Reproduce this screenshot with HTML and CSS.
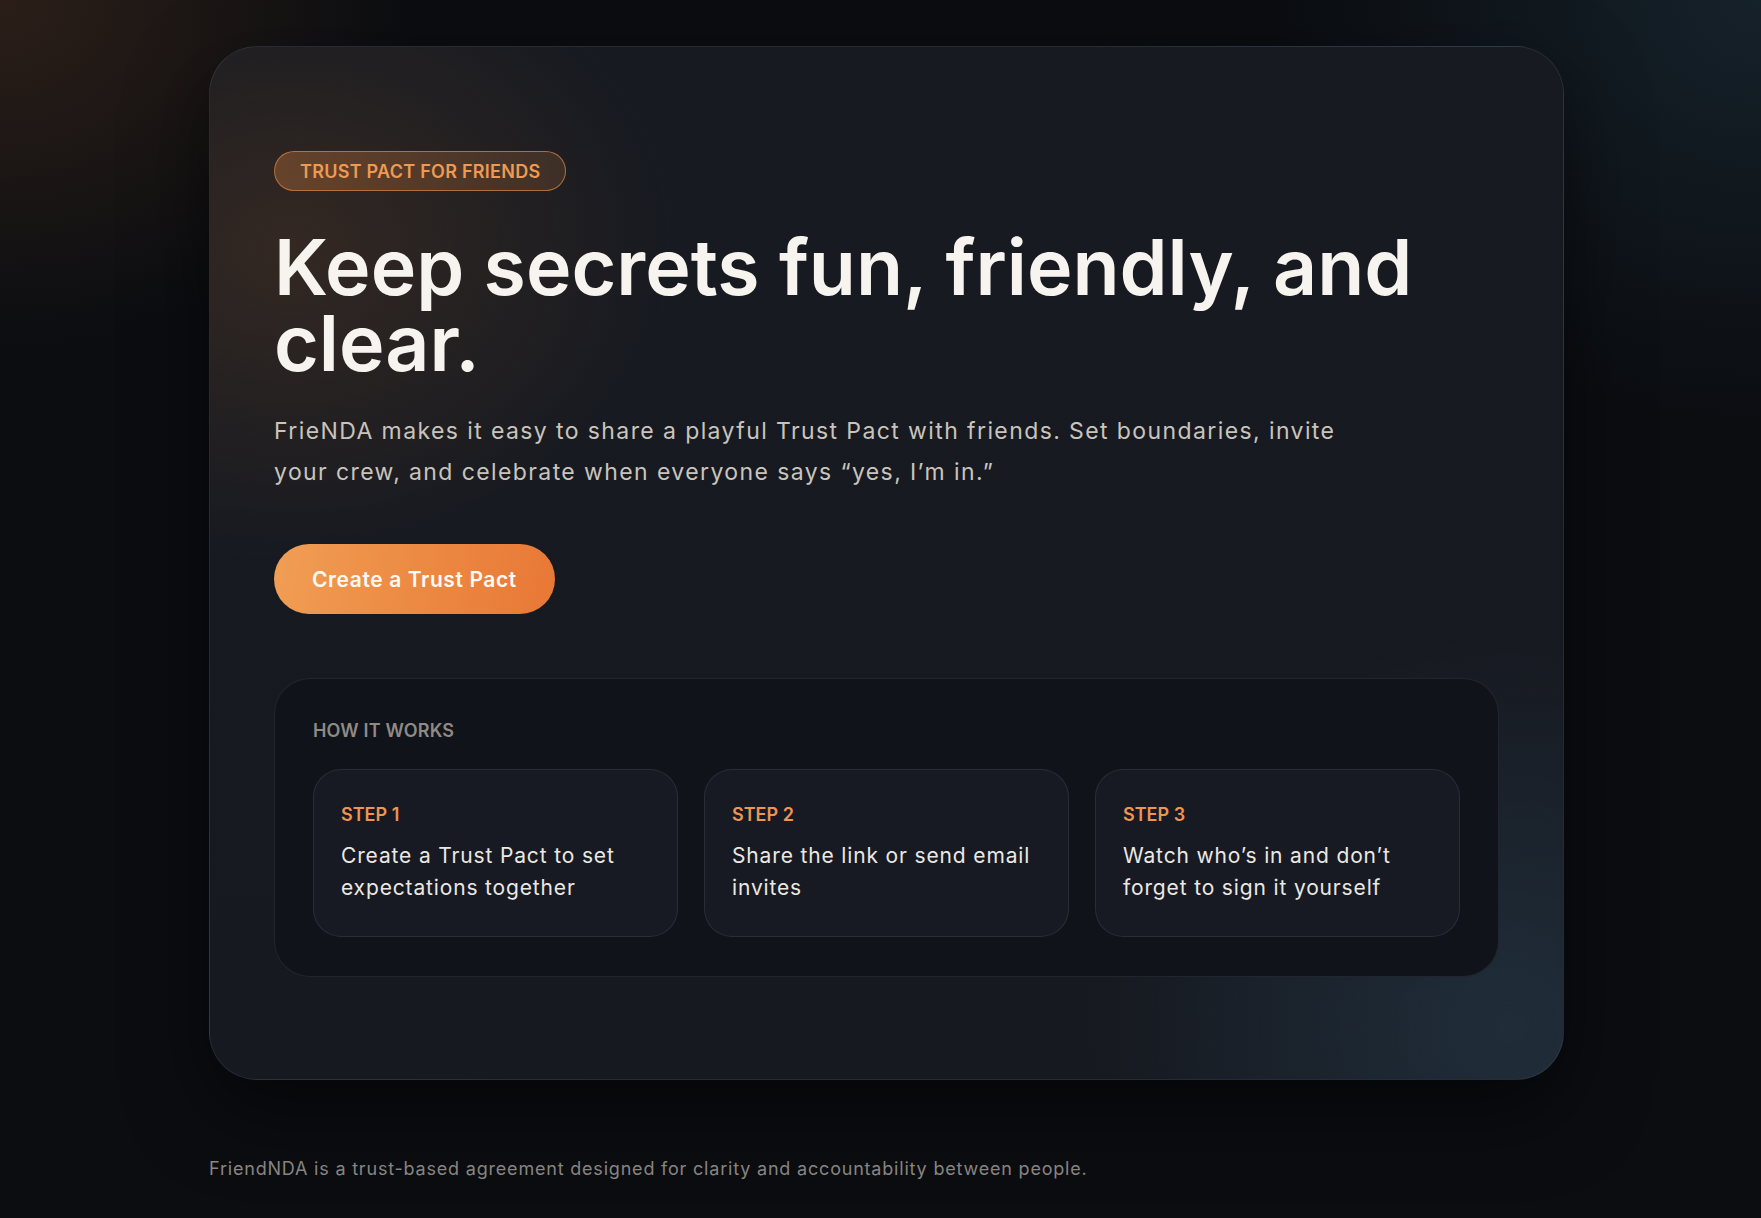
FILE: index.html
```html
<!DOCTYPE html>
<html lang="en">
<head>
<meta charset="utf-8">
<title>FrieNDA — Trust Pact for Friends</title>
<link rel="stylesheet" href="styles.css">
</head>
<body>
<main class="page">
  <section class="card">
    <span class="badge">Trust Pact for Friends</span>
    <h1 class="title">Keep secrets fun, friendly, and clear.</h1>
    <p class="lead">FrieNDA makes it easy to share a playful Trust Pact with friends. Set boundaries, invite your crew, and celebrate when everyone says “yes, I’m in.”</p>
    <a class="btn" href="#">Create a Trust Pact</a>
    <div class="how">
      <div class="how-title">How it works</div>
      <div class="steps">
        <div class="step">
          <div class="step-label">Step 1</div>
          <div class="step-text">Create a Trust Pact to set expectations together</div>
        </div>
        <div class="step">
          <div class="step-label">Step 2</div>
          <div class="step-text">Share the link or send email invites</div>
        </div>
        <div class="step">
          <div class="step-label">Step 3</div>
          <div class="step-text">Watch who’s in and don’t forget to sign it yourself</div>
        </div>
      </div>
    </div>
  </section>
  <footer class="foot">FriendNDA is a trust-based agreement designed for clarity and accountability between people.</footer>
</main>
</body>
</html>
```

FILE: styles.css
```css
* { box-sizing: border-box; }

html, body { margin: 0; }

body {
  min-height: 100vh;
  font-family: Inter, "Noto Sans", sans-serif;
  color: #f6f3ee;
  background:
    radial-gradient(600px 500px at 0 0, rgba(70, 45, 30, 0.55), rgba(70, 45, 30, 0) 70%),
    radial-gradient(700px 600px at 100% 0, rgba(30, 50, 62, 0.55), rgba(30, 50, 62, 0) 70%),
    #0b0d11;
}

.page {
  width: 1355px;
  margin-left: 209px;
  padding-top: 46px;
  padding-bottom: 40px;
}

.card {
  position: relative;
  border: 1px solid rgba(120, 140, 170, 0.16);
  border-radius: 48px;
  padding: 104px 64px 102px 64px;
  background:
    radial-gradient(520px 420px at 80px 200px, rgba(75, 52, 36, 0.55), rgba(75, 52, 36, 0) 75%),
    radial-gradient(560px 520px at 1300px 980px, rgba(35, 52, 66, 0.75), rgba(35, 52, 66, 0) 75%),
    linear-gradient(180deg, #171a21 0%, #161920 100%);
  box-shadow: 0 30px 80px rgba(0, 0, 0, 0.55);
}

.badge {
  display: inline-flex;
  align-items: center;
  height: 40px;
  padding: 0 25px;
  border: 1px solid rgba(214, 130, 66, 0.75);
  border-radius: 999px;
  background: linear-gradient(90deg, rgba(150, 92, 50, 0.55), rgba(120, 80, 50, 0.35));
  color: #ee9a52;
  font-size: 18px;
  font-weight: 600;
  letter-spacing: 0.015em;
  text-transform: uppercase;
}

.title {
  margin: 38px 0 0;
  font-size: 77px;
  line-height: 76px;
  font-weight: 600;
  letter-spacing: 0;
  color: #f7f4ef;
  max-width: 1200px;
}

.lead {
  margin: 30px 0 0;
  max-width: 1100px;
  font-size: 23px;
  line-height: 41px;
  color: #c9c4bd;
  letter-spacing: 1.4px;
}

.btn {
  display: inline-flex;
  align-items: center;
  height: 70px;
  margin-top: 51px;
  padding: 0 38px;
  border-radius: 35px;
  background: linear-gradient(100deg, #f19e55 0%, #ec8a43 50%, #e87835 100%);
  color: #fffaf4;
  font-size: 21px;
  font-weight: 600;
  letter-spacing: 0.6px;
  text-decoration: none;
}

.how {
  margin-top: 64px;
  padding: 41px 38px 39px;
  border: 1px solid rgba(120, 135, 160, 0.16);
  border-radius: 36px;
  background: #10131a;
}

.how-title {
  font-size: 18px;
  font-weight: 600;
  letter-spacing: 0.01em;
  text-transform: uppercase;
  color: #8f8a84;
}

.steps {
  display: grid;
  grid-template-columns: repeat(3, 1fr);
  gap: 26px;
  margin-top: 28px;
}

.step {
  height: 168px;
  padding: 33px 27px 0;
  border: 1px solid rgba(120, 135, 160, 0.18);
  border-radius: 28px;
  background: #171a22;
}

.step-label {
  font-size: 18px;
  font-weight: 600;
  text-transform: uppercase;
  color: #ee9550;
  line-height: 24px;
}

.step-text {
  margin-top: 13px;
  font-size: 21px;
  line-height: 32px;
  color: #ebe8e3;
  letter-spacing: 0.85px;
}

.foot {
  margin-top: 78px;
  font-size: 18px;
  color: #8d8985;
  letter-spacing: 0.8px;
}
```
